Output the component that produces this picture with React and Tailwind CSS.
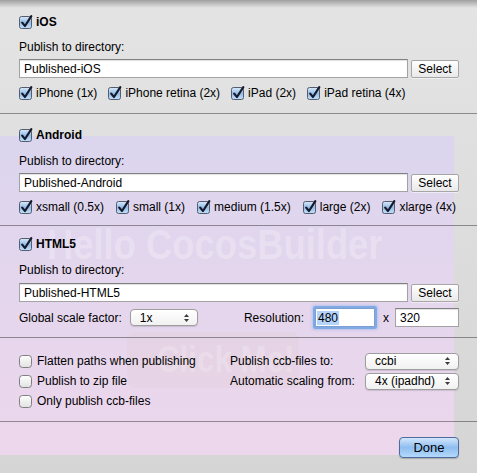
import React from "react";

const Checked = () => (
  <svg width="14" height="14" viewBox="0 0 14 14" className="shrink-0 overflow-visible">
    <defs>
      <linearGradient id="cbg" x1="0" y1="0" x2="0" y2="1">
        <stop offset="0" stopColor="#dbe9f9" />
        <stop offset="0.5" stopColor="#93bde9" />
        <stop offset="1" stopColor="#c4dff9" />
      </linearGradient>
    </defs>
    <rect x="0.5" y="1.5" width="12" height="12" rx="2" fill="url(#cbg)" stroke="#535d6e" />
    <path d="M3.2 7.6 L6 11 L12.3 1.2" fill="none" stroke="#161a2b" strokeWidth="2.2" strokeLinecap="round" strokeLinejoin="round" />
  </svg>
);

const Unchecked = () => (
  <svg width="13" height="13" viewBox="0 0 13 13" className="shrink-0">
    <defs>
      <linearGradient id="ucg" x1="0" y1="0" x2="0" y2="1">
        <stop offset="0" stopColor="#ffffff" />
        <stop offset="0.5" stopColor="#f0f0f0" />
        <stop offset="1" stopColor="#e2e2e2" />
      </linearGradient>
    </defs>
    <rect x="0.5" y="0.5" width="12" height="12" rx="3" fill="url(#ucg)" stroke="#7f7f7f" />
  </svg>
);

const Arrows = () => (
  <svg width="7" height="10" viewBox="0 0 7 10" className="shrink-0">
    <path d="M3.5 1 L6 4 L1 4 Z" fill="#3a3a3a" />
    <path d="M1 6 L6 6 L3.5 9 Z" fill="#3a3a3a" />
  </svg>
);

const CheckItem = ({ label }) => (
  <div className="flex items-center gap-[3px]">
    <Checked />
    <span>{label}</span>
  </div>
);

const UncheckItem = ({ label }) => (
  <div className="flex h-[20px] items-center gap-[5px]">
    <Unchecked />
    <span>{label}</span>
  </div>
);

const Header = ({ label }) => (
  <div className="flex h-[14px] items-center gap-[3px]">
    <Checked />
    <span className="font-bold">{label}</span>
  </div>
);

const TextField = ({ value }) => (
  <div className="flex h-[19px] flex-1 items-center border border-[#a3a3a3] border-t-[#808080] bg-white pl-[4px] shadow-[inset_0_1px_1px_rgba(0,0,0,0.12)]">
    {value}
  </div>
);

const SelectButton = () => (
  <div className="ml-[3px] flex h-[18px] w-[48px] items-center justify-center rounded-[2px] border border-[#a6a6a6] bg-gradient-to-b from-[#ffffff] to-[#e9e9e9] shadow-[0_1px_0_rgba(255,255,255,0.5)]">
    Select
  </div>
);

const Popup = ({ value, w }) => (
  <div
    className={`flex h-[17px] items-center justify-between rounded-[4px] border border-[#9d9d9d] bg-gradient-to-b from-[#ffffff] to-[#f1f1f1] pl-[9px] pr-[7px] shadow-[0_1px_1px_rgba(0,0,0,0.12)] ${w}`}
  >
    <span>{value}</span>
    <Arrows />
  </div>
);

const Separator = () => <div className="h-px w-full bg-black/[0.38]" />;

export default function App() {
  return (
    <div className="relative h-[473px] w-[477px] overflow-hidden bg-gradient-to-b from-[#e4e4e4] to-[#d5d5d5] font-['Liberation_Sans',Arial,sans-serif] text-[12px] leading-[14px] text-black">
      {/* stage canvas behind the translucent sheet */}
      <div className="absolute left-0 top-[136px] h-[319px] w-[454px] bg-gradient-to-b from-[#dbd5ee] to-[#edd7ec]" aria-hidden="true">
        <div className="absolute left-[47px] top-[88px] origin-left scale-x-[0.866] whitespace-nowrap text-[42px] font-bold leading-[42px] text-white/25">
          Hello CocosBuilder
        </div>
        <div className="absolute left-[127px] top-[196px] flex h-[56px] w-[172px] items-center rounded-[8px] bg-[#d9b9a8]/10">
          <span className="ml-[30px] origin-left scale-x-[0.87] whitespace-nowrap text-[36px] font-bold leading-[36px] text-white/20">
            Click Me!
          </span>
        </div>
      </div>
      {/* top shadow */}
      <div className="absolute left-0 top-0 h-[8px] w-full bg-gradient-to-b from-black/30 to-transparent" />

      <div className="relative flex flex-col">
        {/* iOS */}
        <div className="flex h-[113px] flex-col pl-[19px] pr-[18px] pt-[15px]">
          <Header label="iOS" />
          <div className="mt-[11px]">Publish to directory:</div>
          <div className="mt-[5px] flex items-center">
            <TextField value="Published-iOS" />
            <SelectButton />
          </div>
          <div className="mt-[8px] flex h-[14px] items-center gap-[11px]">
            <CheckItem label="iPhone (1x)" />
            <CheckItem label="iPhone retina (2x)" />
            <CheckItem label="iPad (2x)" />
            <CheckItem label="iPad retina (4x)" />
          </div>
        </div>
        <Separator />

        {/* Android */}
        <div className="flex h-[111px] flex-col pl-[19px] pr-[18px] pt-[14px]">
          <Header label="Android" />
          <div className="mt-[12px]">Publish to directory:</div>
          <div className="mt-[5px] flex items-center">
            <TextField value="Published-Android" />
            <SelectButton />
          </div>
          <div className="mt-[8px] flex h-[14px] items-center gap-[12px]">
            <CheckItem label="xsmall (0.5x)" />
            <CheckItem label="small (1x)" />
            <CheckItem label="medium (1.5x)" />
            <CheckItem label="large (2x)" />
            <CheckItem label="xlarge (4x)" />
          </div>
        </div>
        <Separator />

        {/* HTML5 */}
        <div className="flex h-[111px] flex-col pl-[19px] pr-[18px] pt-[11px]">
          <Header label="HTML5" />
          <div className="mt-[12px]">Publish to directory:</div>
          <div className="mt-[6px] flex items-center">
            <TextField value="Published-HTML5" />
            <SelectButton />
          </div>
          <div className="mt-[6px] flex h-[19px] items-center">
            <span>Global scale factor:</span>
            <div className="ml-[8px]">
              <Popup value="1x" w="w-[68px]" />
            </div>
            <div className="flex-1" />
            <span>Resolution:</span>
            <div className="ml-[11px] flex h-[19px] w-[60px] items-center rounded-[1px] border border-[#7b9fd0] bg-white pl-[1px] shadow-[0_0_0_2px_rgba(110,160,225,0.75),0_0_3px_3px_rgba(120,170,235,0.45)]">
              <span className="bg-[#b5d4fb] px-[1px]">480</span>
            </div>
            <span className="ml-[8px]">x</span>
            <div className="ml-[6px] flex h-[19px] w-[64px] items-center border border-[#a3a3a3] border-t-[#808080] bg-white pl-[4px] shadow-[inset_0_1px_1px_rgba(0,0,0,0.12)]">
              320
            </div>
          </div>
        </div>
        <Separator />

        {/* options */}
        <div className="flex h-[83px] pl-[19px] pr-[18px] pt-[13px]">
          <div className="flex w-[211px] flex-col">
            <UncheckItem label="Flatten paths when publishing" />
            <UncheckItem label="Publish to zip file" />
            <UncheckItem label="Only publish ccb-files" />
          </div>
          <div className="flex flex-1 flex-col">
            <div className="flex h-[20px] items-center">
              <span className="w-[135px]">Publish ccb-files to:</span>
              <Popup value="ccbi" w="w-[94px]" />
            </div>
            <div className="flex h-[20px] items-center">
              <span className="w-[135px]">Automatic scaling from:</span>
              <Popup value="4x (ipadhd)" w="w-[94px]" />
            </div>
          </div>
        </div>
        <Separator />

        {/* footer */}
        <div className="flex pl-[19px] pr-[18px] pt-[15px]">
          <div className="ml-auto flex h-[21px] w-[60px] items-center justify-center rounded-[4px] border border-[#4d6c9c] bg-gradient-to-b from-[#d3e6fb] via-[#8fbef0] to-[#b4d9fc] text-[13px] shadow-[0_1px_1px_rgba(0,0,0,0.2)]">
            Done
          </div>
        </div>
      </div>
    </div>
  );
}
